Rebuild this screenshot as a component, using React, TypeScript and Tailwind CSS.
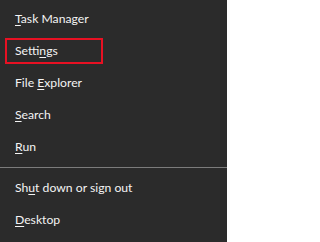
const items: { before: string; key: string; after: string }[][] = [
  [
    { before: "", key: "T", after: "ask Manager" },
    { before: "Setti", key: "n", after: "gs" },
    { before: "File ", key: "E", after: "xplorer" },
    { before: "", key: "S", after: "earch" },
    { before: "", key: "R", after: "un" },
  ],
  [
    { before: "Sh", key: "u", after: "t down or sign out" },
    { before: "", key: "D", after: "esktop" },
  ],
];

function Label({ item }: { item: { before: string; key: string; after: string } }) {
  return (
    <span>
      {item.before}
      <span className="underline decoration-1 underline-offset-2">{item.key}</span>
      {item.after}
    </span>
  );
}

export default function App() {
  return (
    <div
      className="w-[227px] h-[242px] bg-[#2b2b2b] text-[#f4f4f4] text-[12.2px] pt-[3px]"
      style={{ fontFamily: 'Lato, "Noto Sans", sans-serif' }}
    >
      <div className="flex flex-col">
        {items[0].map((item, i) => (
          <div key={i} className="h-8 flex items-center">
            {i === 1 ? (
              <div className="ml-[5px] w-[98px] h-[26px] border-2 border-[#e81123] flex items-center pl-[8px]">
                <Label item={item} />
              </div>
            ) : (
              <div className="pl-[15px]">
                <Label item={item} />
              </div>
            )}
          </div>
        ))}
      </div>
      <div className="h-px bg-[#7c7c7c] my-1" />
      <div className="flex flex-col">
        {items[1].map((item, i) => (
          <div key={i} className="h-8 flex items-center pl-[15px]">
            <Label item={item} />
          </div>
        ))}
      </div>
    </div>
  );
}
